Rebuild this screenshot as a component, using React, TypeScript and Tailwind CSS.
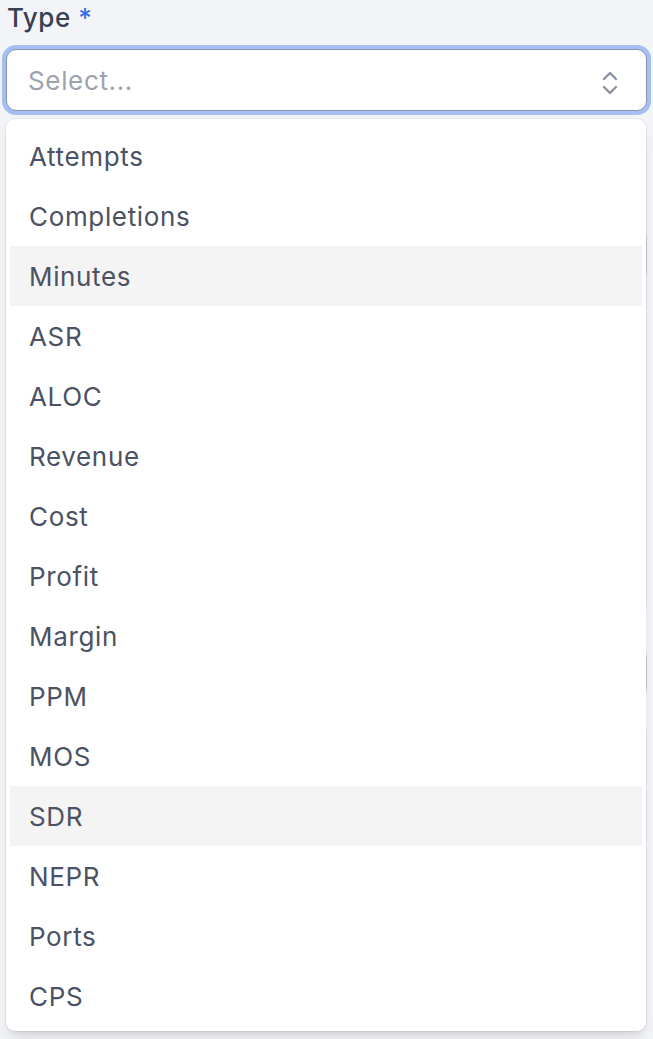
import React, { useState } from "react";

const TYPES = [
  "Attempts",
  "Completions",
  "Minutes",
  "ASR",
  "ALOC",
  "Revenue",
  "Cost",
  "Profit",
  "Margin",
  "PPM",
  "MOS",
  "SDR",
  "NEPR",
  "Ports",
  "CPS",
];

const UpDownIcon = () => (
  <svg
    width="16"
    height="24"
    viewBox="0 0 16 24"
    fill="none"
    stroke="currentColor"
    strokeWidth="2.25"
    strokeLinecap="round"
    strokeLinejoin="round"
  >
    <path d="M2 8 L8 2 L14 8" />
    <path d="M2 16 L8 22 L14 16" />
  </svg>
);

export default function App() {
  const [hovered, setHovered] = useState<string | null>(null);
  const highlighted = ["Minutes", "SDR"];

  return (
    <div className="min-h-screen bg-[#f3f4f7] px-[6px] font-['Inter',sans-serif]">
      {/* Type field */}
      <div>
        <label className="block pl-[1px] text-[26px] leading-[36px] font-medium tracking-[0.02em] text-[#374151]">
          Type <span className="text-[#2f6fe8]">*</span>
        </label>

        <div className="relative mt-[13px]">
          <button
            type="button"
            className="flex h-[62px] w-full items-center justify-between rounded-[10px] border border-[#8893b0] bg-white pl-[21px] pr-[28px] shadow-sm ring-4 ring-[#a6bff2]"
          >
            <span className="text-[26px] text-[#9ca3af] tracking-[0.025em]">Select...</span>
            <span className="mt-[6px] text-[#878e9e]">
              <UpDownIcon />
            </span>
          </button>

          <ul className="absolute left-0 right-[1px] top-[70px] z-10 rounded-[9px] bg-white px-[4px] pt-[7px] pb-[5px] shadow-lg ring-1 ring-black/5">
            {TYPES.map((t) => (
              <li
                key={t}
                onMouseEnter={() => setHovered(t)}
                onMouseLeave={() => setHovered(null)}
                className={
                  "flex h-[60px] items-center pl-[19px] text-[26px] tracking-[0.025em] text-[#4b5263] " +
                  (highlighted.includes(t) || hovered === t ? "bg-[#f4f4f5]" : "")
                }
              >
                {t}
              </li>
            ))}
          </ul>
        </div>
      </div>

      {/* fields under the open menu */}
      <div className="mt-[117px]">
        <div className="h-[54px] rounded-[10px] border border-[#d1d5db] bg-white" />
      </div>

      <div className="mt-[318px] rounded-[10px] bg-white pt-[48px] pb-[40px]">
        <div className="h-[50px] rounded-[10px] border border-[#d1d5db] bg-white" />
      </div>
    </div>
  );
}
